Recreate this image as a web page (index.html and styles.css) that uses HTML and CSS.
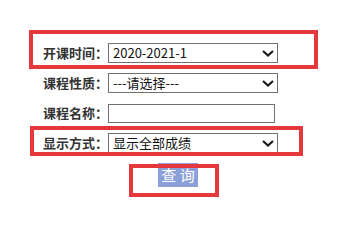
FILE: index.html
```html
<!DOCTYPE html>
<html lang="zh-CN">
<head>
<meta charset="utf-8">
<link rel="stylesheet" href="styles.css">
</head>
<body>
<form class="query-form">
  <div class="row">
    <label class="label">开课时间：</label>
    <div class="select"><span class="select-text">2020-2021-1</span><svg class="chev" viewBox="0 0 12 7" width="12" height="7"><path d="M1 1 L6 5.5 L11 1" fill="none" stroke="#1a1a1a" stroke-width="2.2"/></svg></div>
  </div>
  <div class="row">
    <label class="label">课程性质：</label>
    <div class="select"><span class="select-text">---请选择---</span><svg class="chev" viewBox="0 0 12 7" width="12" height="7"><path d="M1 1 L6 5.5 L11 1" fill="none" stroke="#1a1a1a" stroke-width="2.2"/></svg></div>
  </div>
  <div class="row">
    <label class="label">课程名称：</label>
    <div class="text-input"></div>
  </div>
  <div class="row">
    <label class="label">显示方式：</label>
    <div class="select"><span class="select-text">显示全部成绩</span><svg class="chev" viewBox="0 0 12 7" width="12" height="7"><path d="M1 1 L6 5.5 L11 1" fill="none" stroke="#1a1a1a" stroke-width="2.2"/></svg></div>
  </div>
  <div class="button-row">
    <span class="btn">查 询</span>
  </div>
</form>
<div class="mark mark-1"></div>
<div class="mark mark-2"></div>
<div class="mark mark-3"></div>
</body>
</html>
```
FILE: styles.css
```css
html, body {
  margin: 0;
  padding: 0;
  background: #ffffff;
}
body {
  width: 348px;
  height: 232px;
  position: relative;
  overflow: hidden;
  font-family: "Noto Sans CJK SC", "Noto Sans", sans-serif;
}
.query-form {
  display: flex;
  flex-direction: column;
  gap: 10px;
  padding: 43px 0 0 43px;
}
.row {
  display: flex;
  align-items: center;
  height: 20px;
}
.label {
  width: 65px;
  font-size: 13px;
  font-weight: bold;
  color: #333333;
  line-height: 20px;
  white-space: nowrap;
}
.select {
  box-sizing: border-box;
  width: 170px;
  height: 20px;
  border: 1px solid #707070;
  display: flex;
  align-items: center;
  justify-content: space-between;
  padding: 0 3px 0 4px;
}
.select-text {
  font-size: 13px;
  color: #111111;
  line-height: 18px;
}
.chev {
  display: block;
}
.text-input {
  box-sizing: border-box;
  width: 167px;
  height: 19px;
  border: 1px solid #707070;
}
.button-row {
  display: flex;
  padding-left: 115px;
  position: relative;
  z-index: 1;
}
.btn {
  width: 40px;
  height: 24px;
  background: #8b9fd8;
  color: #ffffff;
  font-size: 15px;
  line-height: 23px;
  text-align: center;
}
.mark {
  position: absolute;
  box-sizing: border-box;
  border: 4px solid #e5383d;
  z-index: 2;
}
.mark-1 { left: 29px; top: 30px; width: 289px; height: 39px; }
.mark-2 { left: 30px; top: 126px; width: 273px; height: 30px; }
.mark-3 { left: 129px; top: 164px; width: 90px; height: 33px; }
```
